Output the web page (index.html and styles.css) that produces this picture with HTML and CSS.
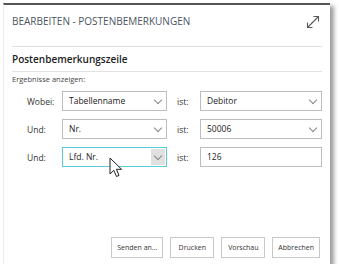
FILE: index.html
```html
<!DOCTYPE html>
<html lang="de">
<head>
  <meta charset="UTF-8" />
  <title>Bearbeiten - Postenbemerkungen</title>
  <link rel="stylesheet" href="styles.css">
</head>
<body>
  <div class="dialog">
    <div class="header">
      <span class="title">BEARBEITEN - POSTENBEMERKUNGEN</span>
      <svg class="expand" width="14" height="14" viewBox="0 0 14 14">
        <path d="M1.5 12.5 L12.5 1.5 M7.5 1.5 H12.5 V6.5 M1.5 7.5 V12.5 H6.5" fill="none" stroke="#5a5a5a" stroke-width="1.1"/>
      </svg>
    </div>

    <div class="section">Postenbemerkungszeile</div>
    <div class="hint">Ergebnisse anzeigen:</div>

    <!-- Filter rows -->
    <div class="rows">
      <div class="row">
        <span class="label">Wobei:</span>
        <div class="field select">Tabellenname<span class="chev"></span></div>
        <span class="label ist">ist:</span>
        <div class="field select wide">Debitor<span class="chev"></span></div>
      </div>
      <div class="row">
        <span class="label">Und:</span>
        <div class="field select">Nr.<span class="chev"></span></div>
        <span class="label ist">ist:</span>
        <div class="field select wide">50006<span class="chev"></span></div>
      </div>
      <div class="row">
        <span class="label">Und:</span>
        <div class="field select focus">Lfd. Nr.<span class="chev hover"></span>
          <svg class="cursor" width="15" height="22" viewBox="0 0 15 22">
            <path d="M1 1 V17 L4.8 13.3 L7.5 19.5 L10 18.4 L7.4 12.3 H12.6 Z" fill="#fff" stroke="#222" stroke-width="1" stroke-linejoin="round"/>
          </svg>
        </div>
        <span class="label ist">ist:</span>
        <div class="field wide">126</div>
      </div>
    </div>

    <div class="buttons">
      <button>Senden an...</button>
      <button>Drucken</button>
      <button>Vorschau</button>
      <button>Abbrechen</button>
    </div>
  </div>
</body>
</html>
```

FILE: styles.css
```css
body {
  margin: 0;
  background: #fff;
  font-family: "Segoe UI", "Open Sans", sans-serif;
  color: #212121;
}
.dialog {
  margin: 3px 0 0 3px;
  width: 327px;
  height: 261px;
  padding: 0 8px;
  box-sizing: border-box;
  background: #fff;
  border-top: 2px solid #555;
  border-left: 1px solid #ececec;
  box-shadow: 4px 3px 4px rgba(0,0,0,0.38);
  display: flex;
  flex-direction: column;
}
.header {
  height: 41px;
  flex-shrink: 0;
  display: flex;
  align-items: flex-start;
  justify-content: space-between;
  border-bottom: 1px solid #e2e2e2;
}
.title {
  font-size: 10px;
  line-height: 12px;
  padding-top: 10px;
  color: #4b5563;
}
.expand {
  margin: 10px 2px 0 0;
}
.section {
  height: 25px;
  flex-shrink: 0;
  box-sizing: border-box;
  line-height: 24px;
  font-size: 10px;
  font-weight: 600;
  color: #222;
  border-bottom: 1px solid #e2e2e2;
}
.hint {
  font-size: 7.5px;
  color: #444;
  line-height: 14px;
}
.rows {
  display: flex;
  flex-direction: column;
  gap: 8px;
  margin-top: 5px;
}
.row {
  display: flex;
  align-items: center;
  height: 20px;
}
.label {
  flex: 0 0 50px;
  padding-left: 15px;
  box-sizing: border-box;
  font-size: 8.5px;
  color: #333;
}
.label.ist {
  flex-basis: 33px;
  padding-left: 10px;
}
.field {
  position: relative;
  flex: 0 0 105px;
  height: 20px;
  box-sizing: border-box;
  border: 1px solid #bdbdbd;
  font-size: 8.5px;
  line-height: 18px;
  padding-left: 6px;
  color: #222;
}
.field.wide {
  flex-basis: 122px;
}
.field.focus {
  border-color: #5ccbd6;
}
.chev {
  position: absolute;
  right: 1px;
  top: 1px;
  width: 14px;
  height: 16px;
}
.chev::after {
  content: "";
  position: absolute;
  left: 4px;
  top: 4px;
  width: 5px;
  height: 5px;
  border-right: 1px solid #888;
  border-bottom: 1px solid #888;
  transform: rotate(45deg);
}
.chev.hover {
  background: #e0e0e0;
}
.cursor {
  position: absolute;
  left: 46px;
  top: 9px;
}
.buttons {
  margin-top: auto;
  margin-bottom: 6px;
  margin-right: 2px;
  display: flex;
  justify-content: flex-end;
  gap: 7px;
}
.buttons button {
  font-family: "Segoe UI", "Open Sans", sans-serif;
  font-size: 7px;
  color: #333;
  background: #fff;
  border: 1px solid #c8c8c8;
  height: 21px;
  padding: 0 5px;
  min-width: 44px;
}
```
